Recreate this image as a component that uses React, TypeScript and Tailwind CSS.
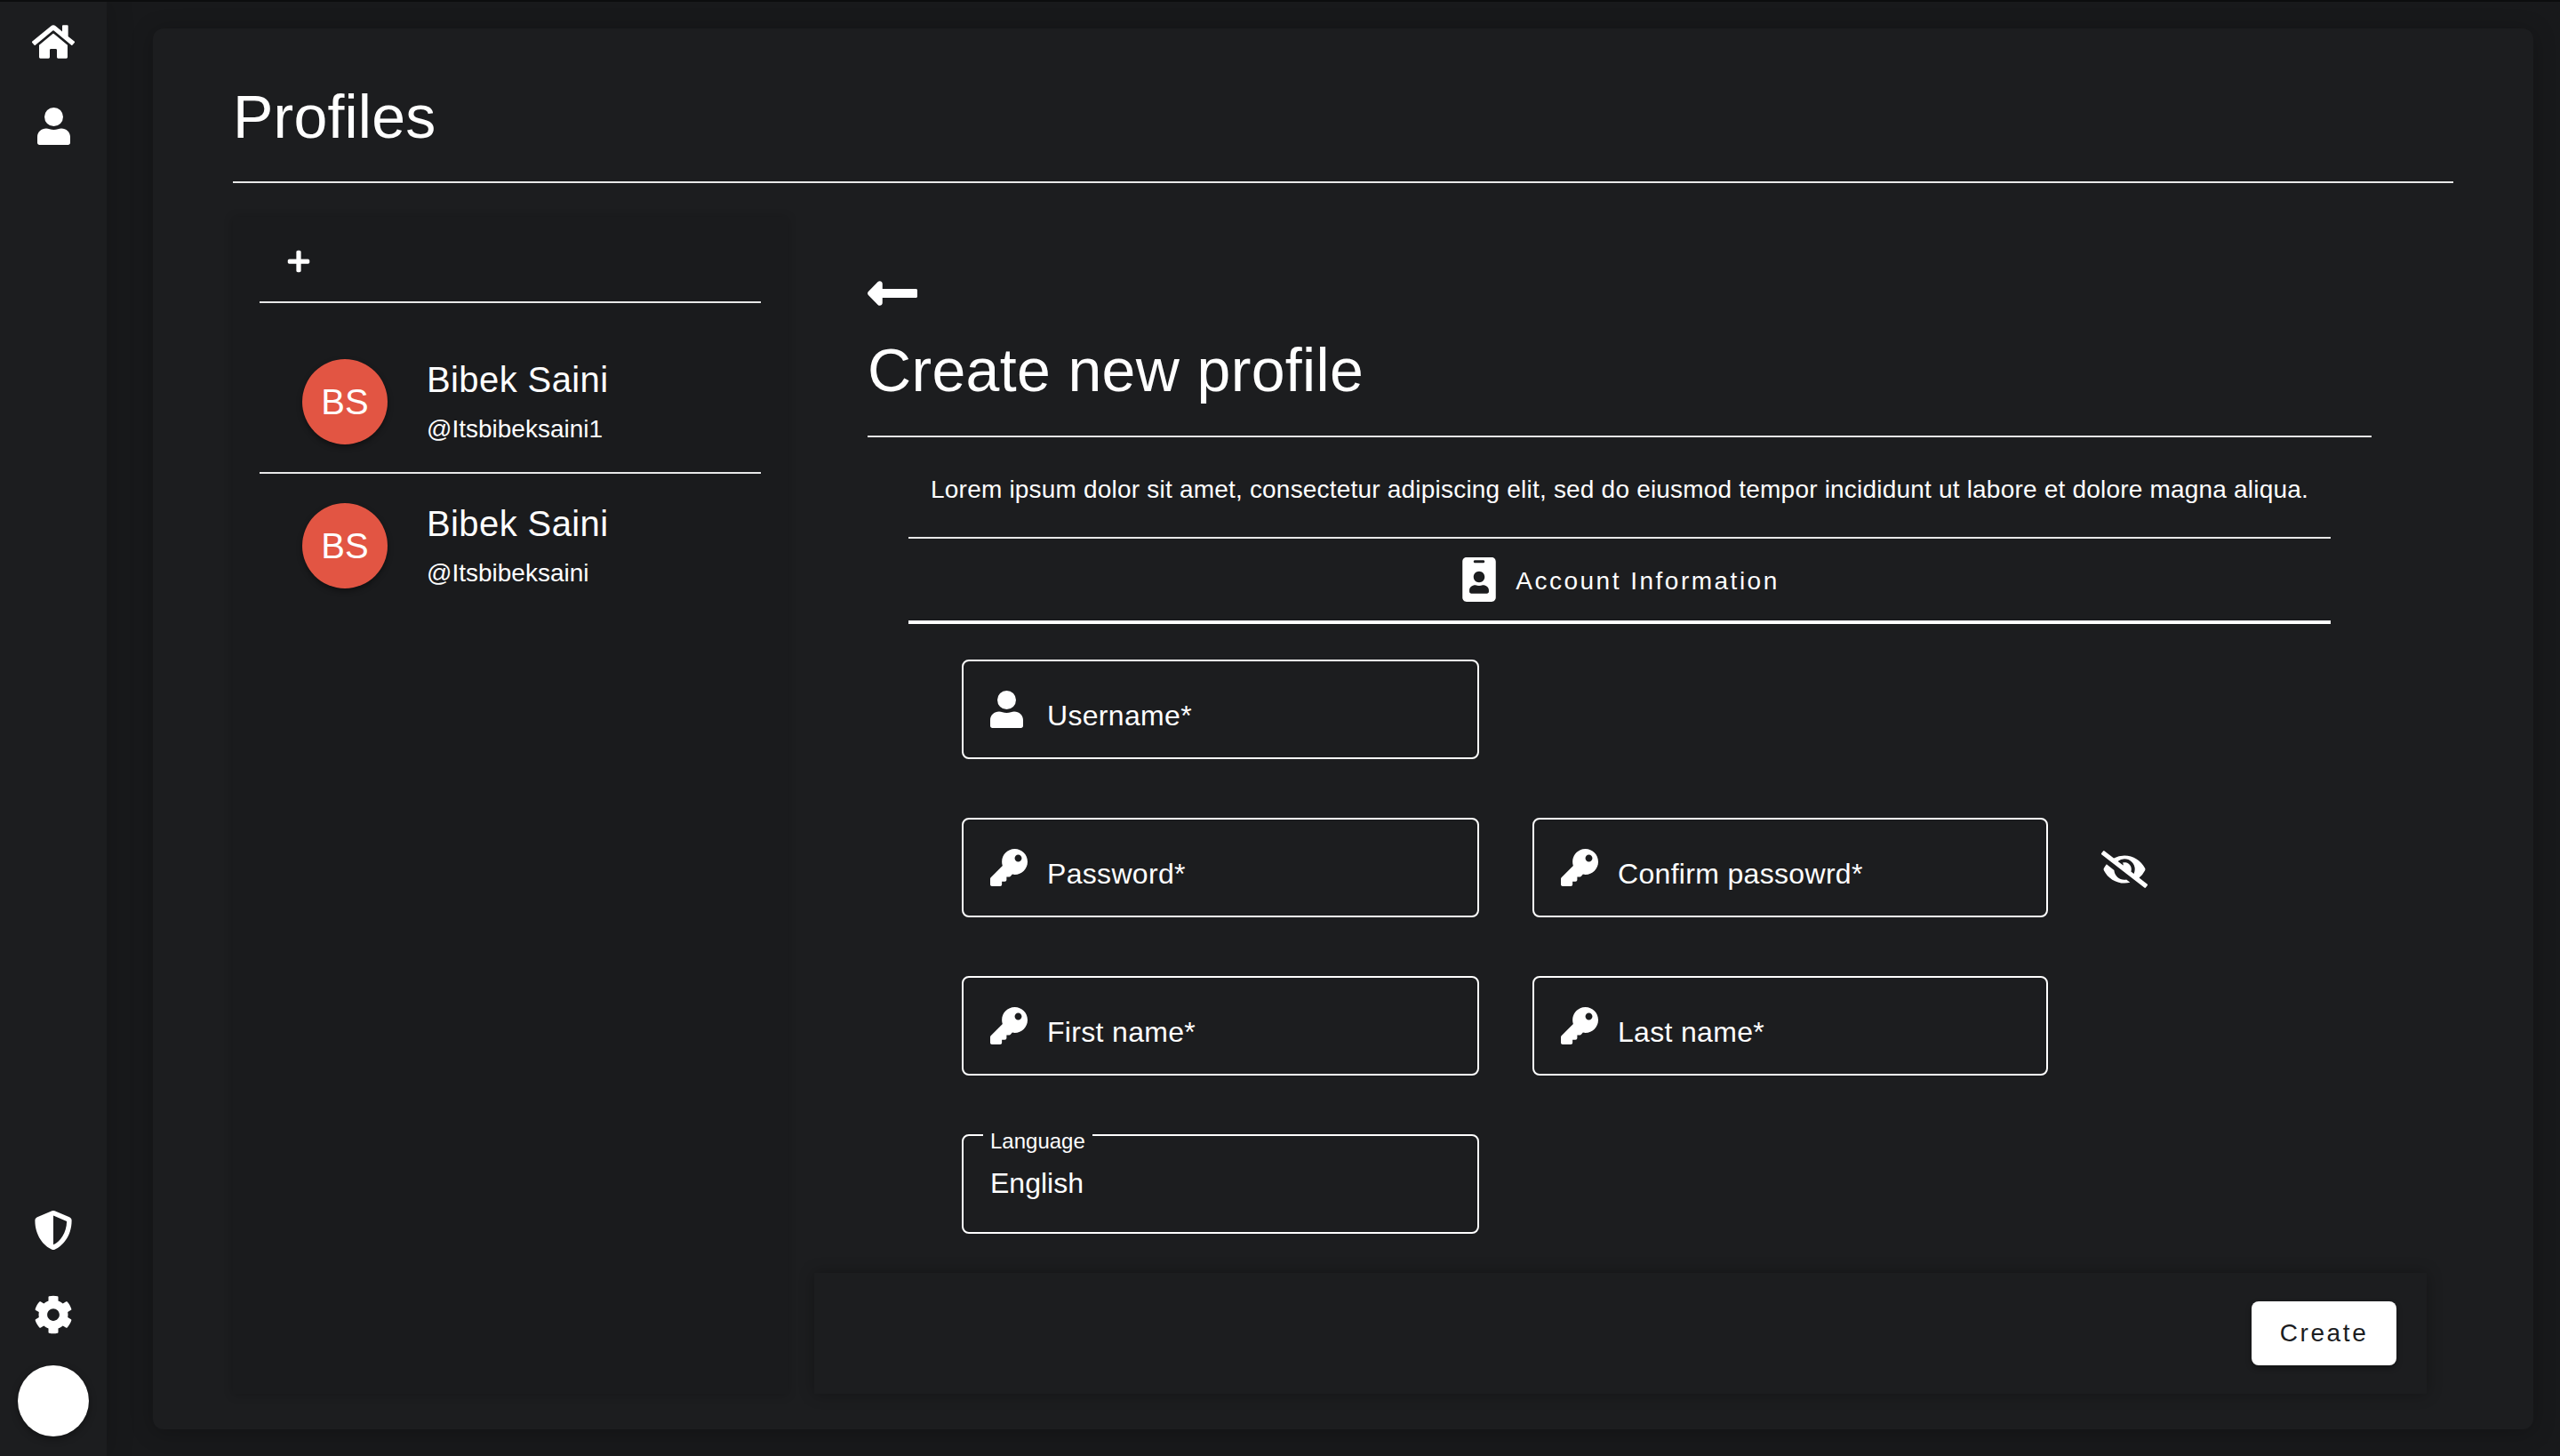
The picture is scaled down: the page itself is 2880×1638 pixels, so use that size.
import React from 'react';
import { FaCog, FaEyeSlash, FaHome, FaIdBadge, FaKey, FaLongArrowAltLeft, FaPlus, FaShieldAlt } from 'react-icons/fa';

const fontStack = { fontFamily: '"Liberation Sans", Arial, sans-serif' };

const PersonIcon = ({ className }: { className: string }) => (
  <svg viewBox="0 0 37 42" className={className} fill="currentColor">
    <ellipse cx="18.5" cy="10.5" rx="10.5" ry="10.5" />
    <path d="M0 33c0-5.500 4.500-9.500 10-9.500 2.500 0 5 1.500 8.500 1.500s6-1.500 8.500-1.500c5.500 0 10 4 10 9.500v6.500c0 1.500-1 2.500-2.500 2.500h-32c-1.500 0-2.500-1-2.500-2.500z" />
  </svg>
);

const Profile = ({ handle, divider }: { handle: string; divider?: boolean }) => (
  <div className={`flex h-[162px] items-start pl-[48px] pt-[33px] ${divider ? 'border-b-2 border-[#e8e8e8]' : ''}`}>
    <div className="flex h-[96px] w-[96px] shrink-0 items-center justify-center rounded-full bg-[#e25543] text-[40px] text-white shadow-[0_3px_6px_rgba(0,0,0,0.4)]">
      BS
    </div>
    <div className="ml-[44px]">
      <div className="text-[40px] leading-[46px] tracking-[0.4px] text-white">Bibek Saini</div>
      <div className="mt-[15px] text-[28px] leading-[36px] text-white">{handle}</div>
    </div>
  </div>
);

const Field = ({ label, icon }: { label: string; icon: 'user' | 'key' }) => (
  <div className="flex h-[112px] w-full items-start rounded-[8px] border-2 border-white pl-[30px]">
    <div className="mt-[33px] w-[64px] shrink-0 text-white">
      {icon === 'user' ? <PersonIcon className="h-[42px] w-[37px]" /> : <FaKey className="h-[42px] w-[42px]" />}
    </div>
    <span className="mt-[41px] text-[32px] leading-[40px] tracking-[0.32px] text-white">{label}</span>
  </div>
);

export default function App() {
  return (
    <div style={fontStack} className="flex h-[1638px] w-[2880px] overflow-hidden border-t-2 border-[#0c0d0e] bg-[#18191b] text-white">
      <aside className="flex h-full w-[120px] shrink-0 flex-col items-center bg-[#1c1d1f] pb-[22px] shadow-[0_0_30px_rgba(0,0,0,0.2)]">
        <FaHome className="mt-[21px] h-[48px] w-[48px] text-white" />
        <PersonIcon className="mt-[50px] h-[42px] w-[37px] text-white" />
        <FaShieldAlt className="mt-auto h-[44px] w-[44px] text-white" />
        <FaCog className="mt-[51px] h-[44px] w-[44px] text-white" />
        <div className="mt-[35px] h-[80px] w-[80px] rounded-full bg-white shadow-[0_3px_8px_rgba(0,0,0,0.35)]" />
      </aside>

      <main className="ml-[52px] mr-[30px] mt-[30px] mb-[30px] flex min-w-0 flex-1 flex-col rounded-[12px] bg-[#1c1d1f] px-[90px] pb-[40px] shadow-[0_3px_24px_rgba(0,0,0,0.25)]">
        <h1 className="h-[174px] border-b-2 border-[#e8e8e8] pt-[60px] text-[68px] leading-[78px] font-normal tracking-[0.2px]">Profiles</h1>

        <div className="mt-[38px] flex min-h-0 flex-1">
          <section className="flex w-[624px] shrink-0 flex-col bg-[#1a1b1d] px-[30px] shadow-[0_1px_10px_rgba(0,0,0,0.2)]">
            <div className="flex h-[97px] items-center border-b-2 border-[#e8e8e8] pl-[30px] pt-[4px]">
              <FaPlus className="h-[28px] w-[28px] text-white" />
            </div>
            <div className="pt-[30px]">
              <Profile handle="@Itsbibeksaini1" divider />
              <Profile handle="@Itsbibeksaini" />
            </div>
          </section>

          <section className="flex min-w-0 flex-1 flex-col px-[30px]">
            <div className="flex-1 pl-[60px] pr-[62px] pt-[54px]">
              <FaLongArrowAltLeft className="h-[64px] w-[56px] text-white" />
              <h2 className="mt-[14px] border-b-2 border-[#e8e8e8] pb-[34px] text-[68px] leading-[80px] font-normal tracking-[0.35px]">Create new profile</h2>
              <div className="mx-[46px]">
                <p className="mt-[39px] text-center text-[28px] leading-[40px] tracking-[0.2px] whitespace-nowrap">
                  Lorem ipsum dolor sit amet, consectetur adipiscing elit, sed do eiusmod tempor incididunt ut labore et dolore magna aliqua.
                </p>
                <div className="mt-[33px] flex h-[98px] items-center justify-center gap-[22px] border-t-2 border-b-4 border-t-[#e8e8e8] border-b-white pl-[3px]">
                  <FaIdBadge className="h-[50px] w-[38px] text-white" />
                  <span className="pt-[3px] text-[28px] tracking-[2.5px]">Account Information</span>
                </div>
                <div className="mt-[40px] grid grid-cols-[582px_580px_auto] gap-x-[60px] gap-y-[66px] pl-[60px]">
                  <Field label="Username*" icon="user" />
                  <div />
                  <div />
                  <Field label="Password*" icon="key" />
                  <Field label="Confirm passowrd*" icon="key" />
                  <div className="flex items-center pt-[4px]">
                    <FaEyeSlash className="h-[52px] w-[52px] text-white" />
                  </div>
                  <Field label="First name*" icon="key" />
                  <Field label="Last name*" icon="key" />
                  <div />
                  <div className="relative h-[112px] rounded-[8px] border-2 border-white pl-[30px] pt-[33px]">
                    <span className="absolute -top-[8px] left-[22px] bg-[#1c1d1f] px-[8px] text-[24px] leading-[28px]">Language</span>
                    <span className="text-[32px] leading-[40px]">English</span>
                  </div>
                </div>
              </div>
            </div>
            <div className="flex h-[136px] items-center justify-end bg-[#1c1d1f] pr-[34px] shadow-[0_0_16px_rgba(0,0,0,0.3)]">
              <button className="h-[72px] w-[163px] rounded-[8px] bg-white text-[28px] tracking-[2.6px] text-[#1c1d1f] shadow-[0_3px_6px_rgba(0,0,0,0.35)]">
                Create
              </button>
            </div>
          </section>
        </div>
      </main>
    </div>
  );
}
